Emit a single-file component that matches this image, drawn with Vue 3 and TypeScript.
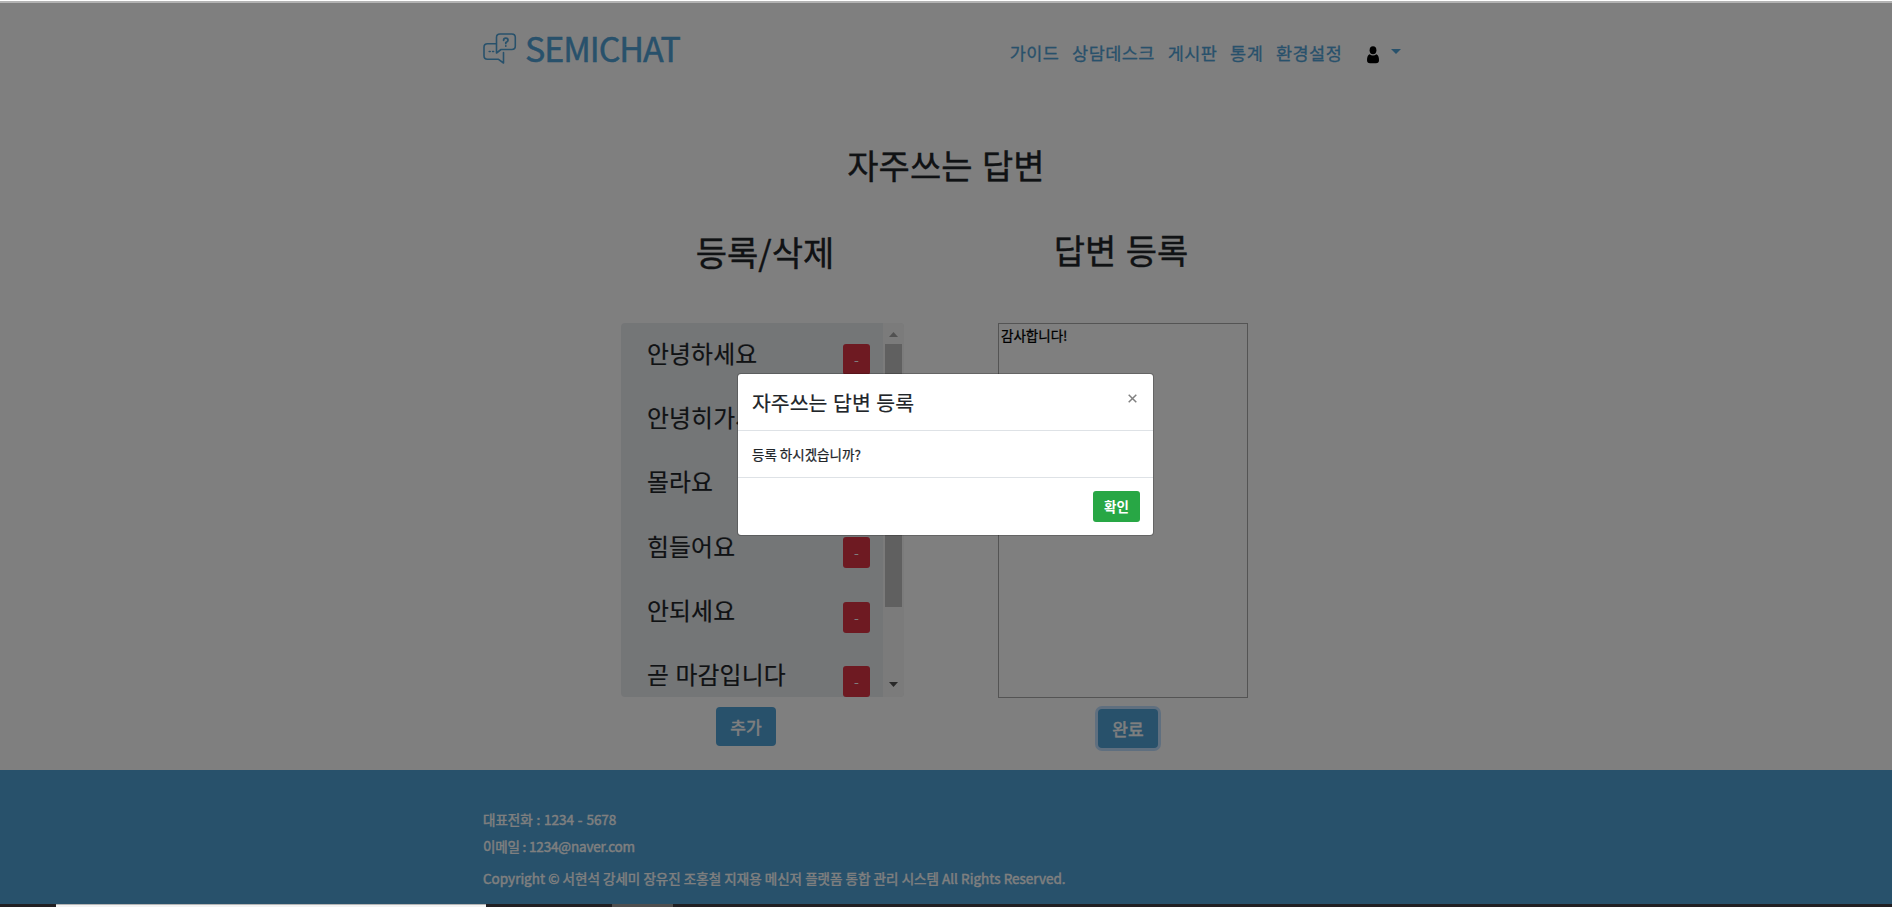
<script setup lang="ts">
const menu: string[] = ['가이드', '상담데스크', '게시판', '통계', '환경설정']
const replies: string[] = ['안녕하세요', '안녕히가세요', '몰라요', '힘들어요', '안되세요', '곧 마감입니다']
const draft = '감사합니다!'
</script>

<template>
  <div class="page">
    <header class="header">
      <a class="brand">
        <svg class="brand-icon" width="34" height="32" viewBox="0 0 34 32" fill="none" stroke="#50a2d6" stroke-width="1.6" stroke-linejoin="round" stroke-linecap="round">
          <path d="M17 1h11.800q3.500 0 3.500 3.500v8.500q0 3.500-3.500 3.500H18l-4.500 3.500V4.500Q13.500 1 17 1Z" />
          <path d="M13 10.800H4.500Q1 10.800 1 14.300v8.500q0 3.500 3.500 3.500H15.500l5 3.700V19.500" />
          <path d="M20.600 7.300q0-2.100 2.200-2.100t2.200 2q0 1.300-2.200 2.300v1M22.800 12.800v.2" stroke-width="1.800" />
          <path d="M6.200 18.500h1M9.600 18.500h1" />
        </svg>
        <span class="brand-name">SEMICHAT</span>
      </a>
      <nav class="nav">
        <a v-for="m in menu" :key="m" class="nav-link">{{ m }}</a>
        <a class="user">
          <svg width="12" height="18" viewBox="0 0 12 18"><ellipse cx="6" cy="4.300" rx="3.400" ry="4" fill="#000" /><path d="M2.600 8.200Q6 11 9.400 8.200 12 9.200 12 14q0 3.300-3 3.300H3Q0 17.300 0 14 0 9.200 2.600 8.200Z" fill="#000" /></svg>
          <span class="caret"></span>
        </a>
      </nav>
    </header>

    <main class="main">
      <h1 class="title">자주쓰는 답변</h1>
      <div class="columns">
        <section class="col list-col">
          <h2 class="subtitle">등록/삭제</h2>
          <div class="list">
            <ul class="items">
              <li v-for="r in replies" :key="r" class="item">
                <span class="item-text">{{ r }}</span>
                <button class="remove">-</button>
              </li>
            </ul>
            <div class="scrollbar">
              <span class="arrow up"></span>
              <span class="thumb"></span>
              <span class="arrow down"></span>
            </div>
          </div>
          <button class="action">추가</button>
        </section>
        <section class="col form-col">
          <h2 class="subtitle">답변 등록</h2>
          <div class="textarea">{{ draft }}</div>
          <button class="action focused">완료</button>
        </section>
      </div>
    </main>

    <footer class="footer">
      <p class="phone">대표전화 : 1234 - 5678</p>
      <p class="email">이메일 : 1234@naver.com</p>
      <p class="copy">Copyright © 서현석 강세미 장유진 조홍철 지재용 메신저 플랫폼 통합 관리 시스템 All Rights Reserved.</p>
    </footer>

    <div class="backdrop"></div>
    <div class="window-top"></div>
    <div class="taskbar"><span class="search"></span><span class="task"></span></div>

    <div class="modal">
      <div class="modal-header">
        <h5 class="modal-title">자주쓰는 답변 등록</h5>
        <svg class="close" width="9" height="9" viewBox="0 0 9 9"><path d="M.7.7l7.600 7.600M8.300.7L.7 8.300" stroke="#808080" stroke-width="1.500" /></svg>
      </div>
      <div class="modal-body">등록 하시겠습니까?</div>
      <div class="modal-footer"><button class="confirm">확인</button></div>
    </div>
  </div>
</template>

<style>
body { margin: 0; overflow: hidden; }
</style>

<style scoped>
.page {
  position: relative;
  display: flex;
  flex-direction: column;
  width: 1892px;
  height: 907px;
  overflow: hidden;
  background: #fff;
  color: #212529;
  font-family: "Noto Sans CJK KR", sans-serif;
  box-sizing: border-box;
}
.page * { box-sizing: border-box; }
h1, h2, h5, p, ul { margin: 0; padding: 0; font-weight: 400; }
button { border: 0; padding: 0; font-family: inherit; color: #fff; }
.header {
  display: flex;
  justify-content: space-between;
  width: 926px;
  height: 140px;
  margin: 0 auto;
  color: #50a2d6;
}
.brand { display: flex; align-items: flex-start; }
.brand-icon { margin-top: 33px; }
.brand-name {
  margin: 23px 0 0 8px;
  font-size: 34px;
  line-height: 50px;
  letter-spacing: -1.05px;
  -webkit-text-stroke: 0.5px currentColor;
}
.nav { display: flex; padding-top: 39px; height: 68px; }
.nav-link {
  margin-right: 12.800px;
  font-size: 17.500px;
  line-height: 28px;
  letter-spacing: 0.45px;
  white-space: nowrap;
  -webkit-text-stroke: 0.3px currentColor;
}
.user { display: flex; margin: 7px 8px 0 12px; }
.caret {
  width: 10px;
  height: 5px;
  margin: 3px 0 0 12px;
  background: #50a2d6;
  clip-path: polygon(0 0, 100% 0, 50% 100%);
}
.main { flex: none; height: 630px; }
.title { height: 52px; margin-top: -1px; font-size: 34px; line-height: 52px; text-align: center; word-spacing: 2px; }
.title, .subtitle { -webkit-text-stroke: 0.4px currentColor; }
.columns { display: flex; padding-left: 621px; }
.col { display: flex; flex-direction: column; align-items: center; }
.list-col { width: 283px; padding-top: 36px; }
.form-col { width: 250px; margin-left: 94px; padding-top: 34px; }
.subtitle { height: 50px; font-size: 34px; line-height: 50px; white-space: nowrap; word-spacing: 2px; }
.list-col .subtitle { margin: 0 0 46px 5px; }
.form-col .subtitle { margin: 0 0 48px -4px; }
.list {
  display: flex;
  width: 283px;
  height: 374px;
  overflow: hidden;
  border-radius: 4px;
  background: #e9ecef;
}
.items { flex: 1; padding-left: 26px; list-style: none; }
.item {
  display: flex;
  justify-content: space-between;
  height: 64.400px;
  padding-right: 13px;
}
.item-text {
  height: 36px;
  margin-top: 11.500px;
  font-size: 23.800px;
  line-height: 36px;
  letter-spacing: 0.15px;
  word-spacing: 1px;
  white-space: nowrap;
  -webkit-text-stroke: 0.2px currentColor;
}
.remove {
  width: 27px;
  height: 31px;
  margin-top: 21px;
  border-radius: 3px;
  background: #dc3545;
  font-size: 14px;
  line-height: 29px;
}
.scrollbar {
  display: flex;
  flex-direction: column;
  align-items: center;
  width: 21px;
  background: #f6f6f6;
}
.arrow { width: 9px; height: 5px; }
.up { margin: 9px 0 7px; background: #a3a3a3; clip-path: polygon(50% 0, 100% 100%, 0 100%); }
.thumb { width: 17px; height: 263px; background: #c1c1c1; }
.down { margin-top: 75px; background: #505050; clip-path: polygon(0 0, 100% 0, 50% 100%); }
.action {
  width: 60px;
  height: 39px;
  border-radius: 4px;
  background: #50a2d6;
  font-size: 17px;
  line-height: 38px;
  -webkit-text-stroke: 0.5px currentColor;
}
.list-col .action { margin: 10px 0 0 -33px; }
.focused { margin: 11px 0 0 10px; box-shadow: 0 0 0 3px #bfdeff; }
.textarea {
  width: 250px;
  height: 375px;
  padding: 1px 2px;
  border: 1px solid #a9a9a9;
  color: #000;
  font-size: 13.500px;
  line-height: 20px;
  -webkit-text-stroke: 0.3px currentColor;
}
.footer {
  flex: none;
  height: 137px;
  padding: 39px 0 0 483px;
  background: #50a2d6;
  color: #fff;
  font-size: 13.500px;
  line-height: 20px;
  white-space: nowrap;
  -webkit-text-stroke: 0.4px currentColor;
}
.phone { word-spacing: 0.8px; }
.email { margin-top: 7px; letter-spacing: -0.17px; }
.copy { margin-top: 12px; word-spacing: 0.15px; }
.backdrop { position: absolute; inset: 0; background: rgba(0, 0, 0, 0.5); }
.window-top { position: absolute; left: 0; right: 0; top: 0; height: 3px; background: #b3b3b3; border-top: 1px solid #fff; }
.taskbar {
  position: absolute;
  left: 0;
  right: 0;
  bottom: 0;
  display: flex;
  height: 3px;
  padding-left: 56px;
  background: #211f22;
}
.search { width: 430px; background: #f3f3f3; border-top: 1px solid #b5b5b5; }
.task { width: 61px; margin-left: 126px; background: #4f4e4e; }
.modal {
  position: absolute;
  left: 737px;
  top: 373px;
  width: 417px;
  height: 163px;
  border: 1px solid rgba(0, 0, 0, 0.2);
  border-radius: 4px;
  background: #fff;
  background-clip: padding-box;
}
.modal-header {
  display: flex;
  justify-content: space-between;
  height: 57px;
  padding: 13px 16px 0 14px;
  border-bottom: 1px solid #dee2e6;
}
.modal-title {
  font-size: 20.500px;
  line-height: 31px;
  word-spacing: 1px;
  -webkit-text-stroke: 0.2px currentColor;
}
.close { margin-top: 7px; }
.modal-body {
  height: 47px;
  padding: 13px 14px;
  border-bottom: 1px solid #dee2e6;
  font-size: 13.500px;
  line-height: 21px;
  -webkit-text-stroke: 0.25px currentColor;
}
.modal-footer { display: flex; justify-content: flex-end; padding: 13px 13px 0; }
.confirm {
  width: 47px;
  height: 31px;
  border-radius: 3px;
  background: #28a745;
  font-size: 13.500px;
  line-height: 31px;
  font-weight: 700;
}
</style>
